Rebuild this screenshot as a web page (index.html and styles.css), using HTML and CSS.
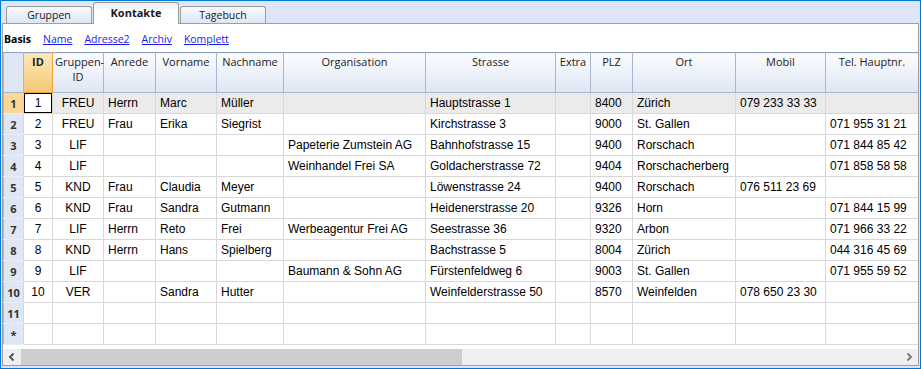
FILE: index.html
```html
<!DOCTYPE html>
<html lang="de">
<head>
    <meta charset="UTF-8">
    <title>Kontakte</title>
    <link rel="stylesheet" href="styles.css">
</head>
<body>

<div class="window">
    <div class="tabs">
        <div class="tab">Gruppen</div>
        <div class="tab active">Kontakte</div>
        <div class="tab">Tagebuch</div>
    </div>

    <div class="panel">
        <div class="views">
            <b>Basis</b>
            <a href="#">Name</a>
            <a href="#">Adresse2</a>
            <a href="#">Archiv</a>
            <a href="#">Komplett</a>
        </div>

        <div class="grid-wrap">
            <table class="grid">
                <colgroup>
                    <col style="width:20px">
                    <col style="width:29px">
                    <col style="width:51px">
                    <col style="width:52px">
                    <col style="width:61px">
                    <col style="width:67px">
                    <col style="width:142px">
                    <col style="width:130px">
                    <col style="width:35px">
                    <col style="width:42px">
                    <col style="width:103px">
                    <col style="width:90px">
                    <col style="width:93px">
                </colgroup>
                <thead>
                    <tr>
                        <th class="corner"></th>
                        <th class="cur-col"><b>ID</b></th>
                        <th>Gruppen-<br>ID</th>
                        <th>Anrede</th>
                        <th>Vorname</th>
                        <th>Nachname</th>
                        <th>Organisation</th>
                        <th>Strasse</th>
                        <th>Extra</th>
                        <th>PLZ</th>
                        <th>Ort</th>
                        <th>Mobil</th>
                        <th>Tel. Hauptnr.</th>
                    </tr>
                </thead>
                <tbody>
                    <tr class="selected">
                        <td class="num cur-row">1</td>
                        <td class="c focus">1</td><td class="c">FREU</td><td>Herrn</td><td>Marc</td><td>Müller</td>
                        <td></td><td>Hauptstrasse 1</td><td></td><td>8400</td><td>Zürich</td><td>079 233 33 33</td><td></td>
                    </tr>
                    <tr>
                        <td class="num">2</td>
                        <td class="c">2</td><td class="c">FREU</td><td>Frau</td><td>Erika</td><td>Siegrist</td>
                        <td></td><td>Kirchstrasse 3</td><td></td><td>9000</td><td>St. Gallen</td><td></td><td>071 955 31 21</td>
                    </tr>
                    <tr>
                        <td class="num">3</td>
                        <td class="c">3</td><td class="c">LIF</td><td></td><td></td><td></td>
                        <td>Papeterie Zumstein AG</td><td>Bahnhofstrasse 15</td><td></td><td>9400</td><td>Rorschach</td><td></td><td>071 844 85 42</td>
                    </tr>
                    <tr>
                        <td class="num">4</td>
                        <td class="c">4</td><td class="c">LIF</td><td></td><td></td><td></td>
                        <td>Weinhandel Frei SA</td><td>Goldacherstrasse 72</td><td></td><td>9404</td><td>Rorschacherberg</td><td></td><td>071 858 58 58</td>
                    </tr>
                    <tr>
                        <td class="num">5</td>
                        <td class="c">5</td><td class="c">KND</td><td>Frau</td><td>Claudia</td><td>Meyer</td>
                        <td></td><td>Löwenstrasse 24</td><td></td><td>9400</td><td>Rorschach</td><td>076 511 23 69</td><td></td>
                    </tr>
                    <tr>
                        <td class="num">6</td>
                        <td class="c">6</td><td class="c">KND</td><td>Frau</td><td>Sandra</td><td>Gutmann</td>
                        <td></td><td>Heidenerstrasse 20</td><td></td><td>9326</td><td>Horn</td><td></td><td>071 844 15 99</td>
                    </tr>
                    <tr>
                        <td class="num">7</td>
                        <td class="c">7</td><td class="c">LIF</td><td>Herrn</td><td>Reto</td><td>Frei</td>
                        <td>Werbeagentur Frei AG</td><td>Seestrasse 36</td><td></td><td>9320</td><td>Arbon</td><td></td><td>071 966 33 22</td>
                    </tr>
                    <tr>
                        <td class="num">8</td>
                        <td class="c">8</td><td class="c">KND</td><td>Herrn</td><td>Hans</td><td>Spielberg</td>
                        <td></td><td>Bachstrasse 5</td><td></td><td>8004</td><td>Zürich</td><td></td><td>044 316 45 69</td>
                    </tr>
                    <tr>
                        <td class="num">9</td>
                        <td class="c">9</td><td class="c">LIF</td><td></td><td></td><td></td>
                        <td>Baumann &amp; Sohn AG</td><td>Fürstenfeldweg 6</td><td></td><td>9003</td><td>St. Gallen</td><td></td><td>071 955 59 52</td>
                    </tr>
                    <tr>
                        <td class="num">10</td>
                        <td class="c">10</td><td class="c">VER</td><td></td><td>Sandra</td><td>Hutter</td>
                        <td></td><td>Weinfelderstrasse 50</td><td></td><td>8570</td><td>Weinfelden</td><td>078 650 23 30</td><td></td>
                    </tr>
                    <tr>
                        <td class="num">11</td>
                        <td></td><td></td><td></td><td></td><td></td><td></td><td></td><td></td><td></td><td></td><td></td><td></td>
                    </tr>
                    <tr>
                        <td class="num">*</td>
                        <td></td><td></td><td></td><td></td><td></td><td></td><td></td><td></td><td></td><td></td><td></td><td></td>
                    </tr>
                </tbody>
            </table>
        </div>

        <div class="hscroll">
            <div class="arrow">
                <svg width="10" height="10" viewBox="0 0 10 10"><path d="M6.5 1.5 L3 5 L6.5 8.5" fill="none" stroke="#555" stroke-width="2"/></svg>
            </div>
            <div class="thumb"></div>
            <div class="track"></div>
            <div class="arrow">
                <svg width="10" height="10" viewBox="0 0 10 10"><path d="M3.5 1.5 L7 5 L3.5 8.5" fill="none" stroke="#7a7a7a" stroke-width="2"/></svg>
            </div>
        </div>
    </div>
</div>

</body>
</html>
```

FILE: styles.css
```css
body {
    margin: 0;
    font-family: "Open Sans", "Noto Sans", sans-serif;
    background: #fff;
}
.window {
    width: 921px;
    height: 369px;
    box-sizing: border-box;
    border: 1px solid #0078d7;
    background: #dce6f8;
    display: flex;
    flex-direction: column;
}
.tabs {
    height: 22px;
    display: flex;
    align-items: flex-end;
    padding-left: 5px;
}
.tab {
    width: 84px;
    height: 16px;
    border: 1px solid #9a9a9a;
    border-bottom: none;
    border-radius: 3px 3px 0 0;
    background: linear-gradient(#f7f9fd, #dfe7f6);
    font-size: 10.5px;
    color: #1a1a1a;
    text-align: center;
    line-height: 16px;
    margin-right: 1px;
}
.tab.active {
    height: 21px;
    line-height: 20px;
    background: linear-gradient(#eaf0fb, #fff 40%);
    font-weight: bold;
    font-size: 11px;
    margin-bottom: -1px;
    position: relative;
    z-index: 1;
}
.panel {
    flex: 1;
    margin: 0 1px 2px 1px;
    border: 1px solid #a0a0a0;
    background: #fff;
    display: flex;
    flex-direction: column;
    min-height: 0;
}
.views {
    height: 28px;
    display: flex;
    align-items: center;
    padding-left: 1px;
    font-size: 10.5px;
    padding-top: 2px;
    box-sizing: border-box;
}
.views b {
    color: #000;
    margin-right: 12px;
}
.views a {
    color: #1a1aee;
    margin-right: 12px;
}
.grid-wrap {
    height: 297px;
    overflow: hidden;
}
.grid {
    border-collapse: collapse;
    table-layout: fixed;
    width: 915px;
}
.grid th {
    height: 40px;
    box-sizing: border-box;
    padding: 1px 2px 0;
    vertical-align: top;
    font-size: 11px;
    font-weight: normal;
    color: #222;
    line-height: 15px;
    background: linear-gradient(#fbfcfe, #dfe7f4);
    border: 1px solid #a6b8d0;
    border-top-color: #8ea2bd;
}
.grid th.corner {
    background: #dfe7f5;
}
.grid th.cur-col {
    background: linear-gradient(#fde9bd, #f6c772);
    border-right-color: #f0a33a;
    border-bottom-color: #f0a33a;
}
.grid td {
    height: 21px;
    box-sizing: border-box;
    padding: 0 4px;
    border: 1px solid #d8d8d8;
    font-family: "Liberation Sans", Arial, sans-serif;
    font-size: 12px;
    color: #000;
    white-space: nowrap;
    overflow: hidden;
}
.grid td.c {
    text-align: center;
}
.grid td.num {
    background: #dfe7f5;
    border-color: #e8eef8;
    border-left: 1px solid #a6b8d0;
    border-right-color: #d0d8e4;
    font-family: "Open Sans", sans-serif;
    font-size: 11px;
    font-weight: bold;
    color: #333;
    text-align: center;
    padding: 0;
}
.grid tr.selected td {
    background: #ebebeb;
}
.grid tr.selected td.num {
    background: #fcd797;
}
.grid tr.selected td.focus {
    background: #fff;
    box-shadow: inset 0 0 0 1px #000;
}
.hscroll {
    height: 16px;
    display: flex;
    background: #efefef;
}
.hscroll .arrow {
    width: 18px;
    display: flex;
    align-items: center;
    justify-content: center;
}
.hscroll .thumb {
    width: 441px;
    background: #cdcdcd;
}
.hscroll .track {
    flex: 1;
}
```
